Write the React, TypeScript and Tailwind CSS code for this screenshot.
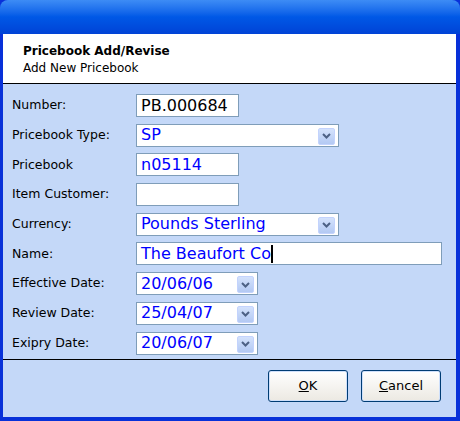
import React from "react";

const Arrow = () => (
  <div className="absolute right-[3px] top-[3px] w-[17px] h-[17px] rounded-[2px] bg-gradient-to-b from-[#d4e2fc] to-[#b3c9f3] border border-[#c3d3fd] flex items-center justify-center">
    <svg width="9" height="6" viewBox="0 0 9 6"><path d="M1 1 L4.5 4.5 L8 1" stroke="#4d6185" strokeWidth="2" fill="none" /></svg>
  </div>
);

const Box = ({ w, val, dark, sel }: { w: string; val: string; dark?: boolean; sel?: boolean }) => (
  <div className={`relative h-[23px] ${w} bg-white border border-[#7f9db9] flex items-center pl-[4px] text-[16px] leading-none ${dark ? "text-black" : "text-[#0000ff]"}`}>
    <span>{val}</span>
    {val === "The Beaufort Co" && <span className="w-[2px] h-[18px] bg-black" />}
    {sel && <Arrow />}
  </div>
);

const rows: [string, string, string, boolean?, boolean?][] = [
  ["Number:", "w-[103px]", "PB.000684", true],
  ["Pricebook Type:", "w-[203px]", "SP", false, true],
  ["Pricebook", "w-[103px]", "n05114"],
  ["Item Customer:", "w-[103px]", ""],
  ["Currency:", "w-[203px]", "Pounds Sterling", false, true],
  ["Name:", "w-[306px]", "The Beaufort Co"],
  ["Effective Date:", "w-[122px]", "20/06/06", false, true],
  ["Review Date:", "w-[122px]", "25/04/07", false, true],
  ["Exipry Date:", "w-[122px]", "20/06/07", false, true],
];

export default function App() {
  return (
    <div className="w-[460px] h-[421px] bg-[#0831d9] flex flex-col" style={{ fontFamily: "Tahoma, 'DejaVu Sans', sans-serif" }}>
      <div className="h-[34px] rounded-t-[8px] bg-gradient-to-b from-[#3d8cf5] via-[#0058e6] to-[#0042d6] shrink-0" />
      <div className="flex-1 mx-[3px] mr-[4px] mb-[4px] bg-[#c4d8f8] flex flex-col">
        <div className="h-[50px] bg-white border-b border-black pl-[20px] pt-[9px] text-[12px] leading-[17px] text-black">
          <div className="font-bold">Pricebook Add/Revise</div>
          <div>Add New Pricebook</div>
        </div>
        <div className="flex flex-col gap-[6.7px] pt-[10px] pl-[9px] h-[276px] border-b border-black text-[12.5px] text-black">
          {rows.map(([l, w, v, dark, sel]) => (
            <div key={l} className="flex items-center">
              <div className="w-[124px]">{l}</div>
              <Box w={w} val={v} dark={dark} sel={sel} />
            </div>
          ))}
        </div>
        <div className="flex justify-end gap-[13px] pr-[15px] pt-[10px]">
          {[["O", "K"], ["C", "ancel"]].map(([u, r]) => (
            <button key={u} className="w-[80px] h-[32px] rounded-[3px] border border-[#003c74] bg-gradient-to-b from-white to-[#ece9e2] text-[13px] text-black shadow-[inset_0_0_0_1px_#cfe0fb]">
              <span className="underline">{u}</span>{r}
            </button>
          ))}
        </div>
      </div>
    </div>
  );
}
